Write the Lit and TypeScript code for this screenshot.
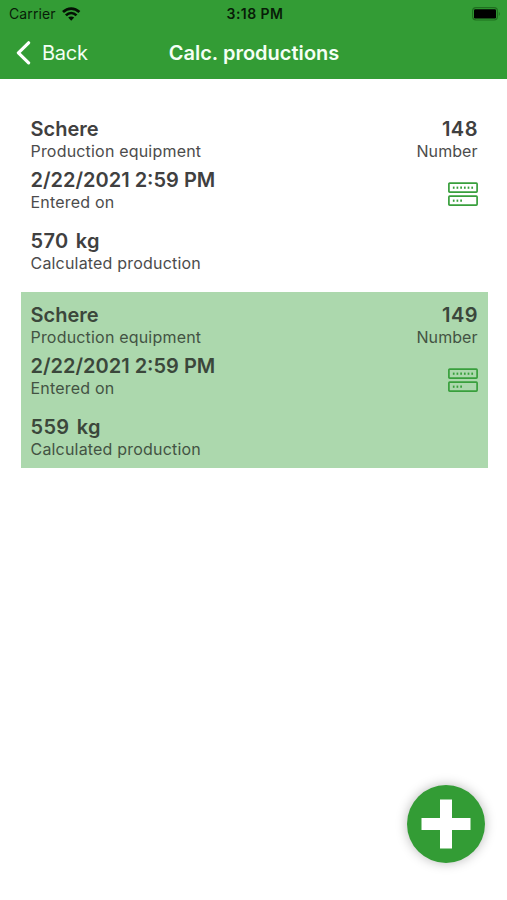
import { LitElement, html, css, svg } from "lit";
import { customElement, property } from "lit/decorators.js";

interface Production {
  equipment: string;
  number: number;
  enteredOn: string;
  amount: string;
  selected: boolean;
}

const productions: Production[] = [
  { equipment: "Schere", number: 148, enteredOn: "2/22/2021 2:59 PM", amount: "570", selected: false },
  { equipment: "Schere", number: 149, enteredOn: "2/22/2021 2:59 PM", amount: "559", selected: true },
];

@customElement("status-bar")
class StatusBar extends LitElement {
  static styles = css`
    :host { display: grid; grid-template-columns: 1fr auto 1fr; align-items: center; height: 27px; padding: 0 6px 0 9px; color: #081c08; font-size: 14px; line-height: 27px; }
    .left { display: flex; align-items: center; gap: 6px; }
    .carrier { letter-spacing: 0.1px; }
    .time { font-weight: 600; letter-spacing: 0.45px; }
    .battery { justify-self: end; }
    svg { display: block; }
  `;
  render() {
    return html`
      <div class="left">
        <span class="carrier">Carrier</span>
        <svg width="19" height="14" viewBox="0 0 19 14" fill="none" stroke="#041004" stroke-width="2.7">
          <path d="M1 5C5.8 .4 12.6 .4 17.4 5" />
          <path d="M3.9 8.4C7 5.4 11.4 5.4 14.5 8.4" />
          <path d="M6.2 10.6C7.9 9 10.5 9 12.2 10.6L9.2 13.8Z" fill="#041004" stroke="none" />
        </svg>
      </div>
      <span class="time">3:18 PM</span>
      <svg class="battery" width="29" height="14" viewBox="0 0 29 14">
        <rect x=".6" y=".6" width="24.8" height="12.4" rx="3.4" fill="none" stroke="#1f701f" stroke-width="1.2" />
        <rect x="2" y="2.2" width="22" height="9.3" rx="1.2" fill="#000" />
        <path d="M26.8 4.7q2 2.1 0 4.2z" fill="#1f701f" />
      </svg>
    `;
  }
}

@customElement("nav-bar")
class NavBar extends LitElement {
  static styles = css`
    :host { display: grid; grid-template-columns: 1fr auto 1fr; align-items: center; height: 52px; padding: 0 15px 0 16px; color: #f4fff4; font-size: 20px; line-height: 51px; }
    .back { display: flex; align-items: center; gap: 11px; letter-spacing: -0.25px; }
    .title { font-weight: 600; letter-spacing: 0.02px; }
    svg { display: block; }
  `;
  render() {
    return html`
      <div class="back">
        <svg width="15" height="24" viewBox="0 0 15 24" fill="none" stroke="#fff" stroke-width="3.2" stroke-linecap="round" stroke-linejoin="round">
          <path d="M12.6 1.8L2.4 11.8L12.6 21.8" />
        </svg>
        <span>Back</span>
      </div>
      <span class="title">Calc. productions</span>
      <span></span>
    `;
  }
}

@customElement("production-card")
class ProductionCard extends LitElement {
  @property({ attribute: false }) item!: Production;
  static styles = css`
    :host { display: block; }
    .card { display: flex; justify-content: space-between; height: 176px; padding: 11px 10px 0; box-sizing: border-box; color: #404040; }
    .selected { background: #acd8ad; color: #3b473b; }
    .right { display: flex; flex-direction: column; align-items: flex-end; }
    .value { font-size: 20px; font-weight: 600; line-height: 24px; height: 24px; white-space: nowrap; }
    .label { font-size: 16px; line-height: 20px; height: 20px; white-space: nowrap; letter-spacing: 0.19px; color: #4c4c4c; }
    .selected .label { color: #435343; }
    .right .value { letter-spacing: 0.5px; margin-right: -0.5px; }
    .right .label { letter-spacing: 0.05px; }
    .entered { margin-top: 7px; }
    .amount { margin-top: 17px; }
    .amount .value { word-spacing: 2px; letter-spacing: 0.3px; }
    svg { display: block; margin-top: 21px; }
  `;
  render() {
    const { equipment, number, enteredOn, amount, selected } = this.item;
    return html`
      <div class="card ${selected ? "selected" : ""}">
        <div>
          <div class="value">${equipment}</div>
          <div class="label">Production equipment</div>
          <div class="entered"><div class="value">${enteredOn}</div><div class="label">Entered on</div></div>
          <div class="amount"><div class="value">${amount} kg</div><div class="label">Calculated production</div></div>
        </div>
        <div class="right">
          <div class="value">${number}</div>
          <div class="label">Number</div>
          <svg width="30" height="24" viewBox="0 0 30 24" fill="none" stroke="#389f3c" stroke-width="1.7">
            <rect x=".9" y="1.1" width="28.2" height="9" rx=".8" />
            <rect x=".9" y="14.1" width="28.2" height="9" rx=".8" />
            ${[5.7, 9.4, 13.1, 16.8, 20.5, 24.2].map((x) => svg`<path d="M${x} 4.6v2.2" />`)}
            ${[5.7, 9.4, 13.1].map((x) => svg`<path d="M${x} 17.6v2.2" />`)}
          </svg>
        </div>
      </div>
    `;
  }
}

@customElement("app-root")
class AppRoot extends LitElement {
  static styles = css`
    :host { display: block; position: relative; height: 900px; background: #fff; overflow: hidden; font-family: Inter, "Liberation Sans", sans-serif; }
    header { background: #339c35; height: 79px; }
    main { display: flex; flex-direction: column; gap: 10px; padding: 27px 19.5px 0 20.5px; }
    .add { position: absolute; right: 22px; bottom: 37px; width: 78px; height: 78px; padding: 0; border: 0; border-radius: 50%; background: #339c35; box-shadow: 0 0 12px rgba(0, 0, 0, 0.28); display: grid; place-items: center; }
    .add svg { display: block; }
  `;
  render() {
    return html`
      <header><status-bar></status-bar><nav-bar></nav-bar></header>
      <main>${productions.map((p) => html`<production-card .item=${p}></production-card>`)}</main>
      <button class="add" aria-label="Add">
        <svg width="50" height="50" viewBox="0 0 50 50"><path d="M19 .5h12v18.5h18.5v12H31v18.5H19V31H.5V19H19z" fill="#fff" /></svg>
      </button>
    `;
  }
}
